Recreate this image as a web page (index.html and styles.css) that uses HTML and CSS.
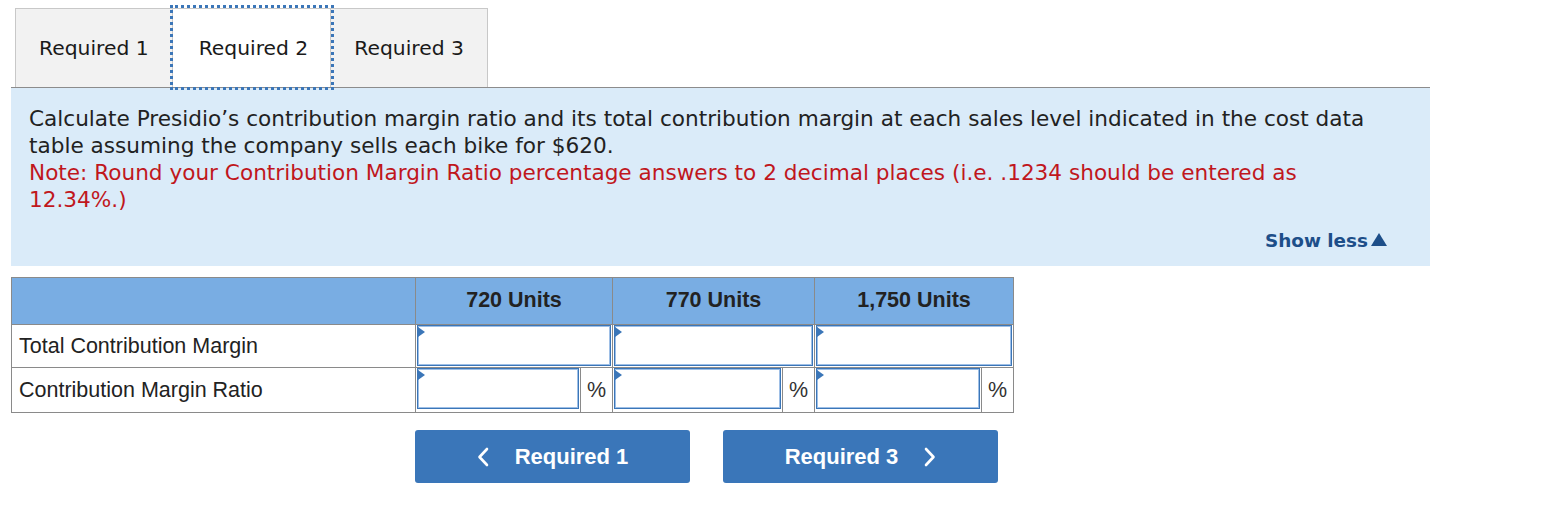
FILE: index.html
```html
<!DOCTYPE html>
<html lang="en">
<head>
	<meta charset="UTF-8">
	<title>Required 2</title>
	<link rel="stylesheet" href="styles.css">
</head>
<body>
	<div class="page">
		<!-- Pestañas -->
		<div class="tabs">
			<div class="tab">Required 1</div>
			<div class="tab active">Required 2</div>
			<div class="tab">Required 3</div>
		</div>

		<div class="question">
			<p class="prompt">Calculate Presidio’s contribution margin ratio and its total contribution margin at each sales level indicated in the cost data<br>table assuming the company sells each bike for $620.</p>
			<p class="note">Note: Round your Contribution Margin Ratio percentage answers to 2 decimal places (i.e. .1234 should be entered as<br>12.34%.)</p>
			<div class="show-less">Show less<svg class="arrow" width="18" height="15" viewBox="0 0 18 15"><path d="M9 1 L17 14 L1 14 Z" fill="#1d4e89"/></svg></div>
		</div>

		<table class="answers">
			<colgroup>
				<col class="c-label">
				<col class="c1">
				<col class="c2">
				<col class="c3">
			</colgroup>
			<thead>
				<tr>
					<th></th>
					<th>720 Units</th>
					<th>770 Units</th>
					<th>1,750 Units</th>
				</tr>
			</thead>
			<tbody>
				<tr class="row-total">
					<td class="label">Total Contribution Margin</td>
					<td><span class="field"><input type="text"></span></td>
					<td><span class="field"><input type="text"></span></td>
					<td><span class="field"><input type="text"></span></td>
				</tr>
				<tr class="row-ratio">
					<td class="label">Contribution Margin Ratio</td>
					<td><div class="pct"><span class="field"><input type="text"></span><span class="unit">%</span></div></td>
					<td><div class="pct"><span class="field"><input type="text"></span><span class="unit">%</span></div></td>
					<td><div class="pct"><span class="field"><input type="text"></span><span class="unit">%</span></div></td>
				</tr>
			</tbody>
		</table>

		<div class="nav">
			<button class="nav-btn">
				<svg width="12" height="20" viewBox="0 0 12 20"><path d="M10 2 L2.5 10 L10 18" fill="none" stroke="#fff" stroke-width="2.6" stroke-linecap="round" stroke-linejoin="round"/></svg>
				<span>Required 1</span>
			</button>
			<button class="nav-btn">
				<span>Required 3</span>
				<svg width="12" height="20" viewBox="0 0 12 20"><path d="M2 2 L9.5 10 L2 18" fill="none" stroke="#fff" stroke-width="2.6" stroke-linecap="round" stroke-linejoin="round"/></svg>
			</button>
		</div>
	</div>
</body>
</html>
```

FILE: styles.css
```css
body {
	margin: 0;
	padding: 0;
	background-color: #fff;
	font-family: "DejaVu Sans", Verdana, sans-serif;
	color: #222;
}
.page {
	padding: 8px 0 0 11px;
}
.tabs {
	display: flex;
	margin-left: 4px;
}
.tab {
	height: 78px;
	display: flex;
	align-items: center;
	padding: 0 23px 0 23px;
	background-color: #f2f2f2;
	border: 1px solid #c8c8c8;
	border-bottom: none;
	font-size: 20.3px;
	color: #1a1a1a;
}
.tab + .tab {
	border-left: none;
}
.tab.active {
	background-color: #fff;
	padding: 0 22px 0 26px;
	outline: 3px dotted #3b76b8;
	position: relative;
	z-index: 1;
}
.question {
	width: 1419px;
	box-sizing: border-box;
	background-color: #daebf9;
	border-top: 1px solid #8c8c8c;
	padding: 17px 10px 12px 18px;
	font-size: 21.6px;
	line-height: 27px;
	white-space: nowrap;
}
.question p {
	margin: 0;
}
.prompt {
	color: #222;
}
.note {
	color: #c0171d;
}
.show-less {
	margin-top: 14px;
	display: flex;
	align-items: center;
	justify-content: flex-end;
	padding-right: 32px;
	font-size: 18.4px;
	font-weight: bold;
	color: #1d4e89;
}
.arrow {
	margin-left: 2px;
	margin-top: -2px;
}
.answers {
	margin-top: 11px;
	border-collapse: collapse;
	table-layout: fixed;
	width: 1002px;
	font-family: "Liberation Sans", Arial, sans-serif;
	font-size: 21.5px;
	border: 1px solid #8a8a8a;
}
.c-label { width: 404px; }
.c1 { width: 197px; }
.c2 { width: 202px; }
.c3 { width: 199px; }
.answers th {
	height: 44px;
	background-color: #79ade3;
	border: 1px solid #8a8a8a;
	border-top: none;
	font-weight: bold;
	color: #222;
	padding: 0 0 2px;
	vertical-align: middle;
}
.answers td {
	border: 1px solid #8a8a8a;
	padding: 0;
	height: 42px;
}
.row-ratio td {
	height: 44px;
}
.answers td.label {
	padding: 0 0 0 7px;
	color: #222;
	vertical-align: middle;
}
.field {
	display: block;
	position: relative;
	height: 100%;
}
.field::before {
	content: "";
	position: absolute;
	left: 2px;
	top: 2px;
	border-top: 5px solid transparent;
	border-bottom: 5px solid transparent;
	border-left: 7px solid #3b76b8;
}
.field input {
	display: block;
	box-sizing: border-box;
	width: calc(100% - 2px);
	height: 41px;
	margin: 0 1px;
	border: 1px solid #3b76b8;
	box-shadow: inset 0 0 0 1px #9ebfe6;
	background: #fff;
	outline: none;
}
.pct {
	display: flex;
	height: 100%;
	align-items: stretch;
}
.pct .field {
	flex: 1;
}
.unit {
	width: 31px;
	display: flex;
	align-items: center;
	justify-content: center;
	border-left: 1px solid #8a8a8a;
	color: #333;
}
.nav {
	display: flex;
	gap: 33px;
	margin: 17px 0 0 404px;
}
.nav-btn {
	width: 275px;
	height: 53px;
	display: flex;
	align-items: center;
	justify-content: center;
	gap: 26px;
	background-color: #3a76b9;
	border: none;
	border-radius: 3px;
	color: #fff;
	font-family: "Liberation Sans", Arial, sans-serif;
	font-size: 22px;
	font-weight: bold;
	padding: 0;
}
```
